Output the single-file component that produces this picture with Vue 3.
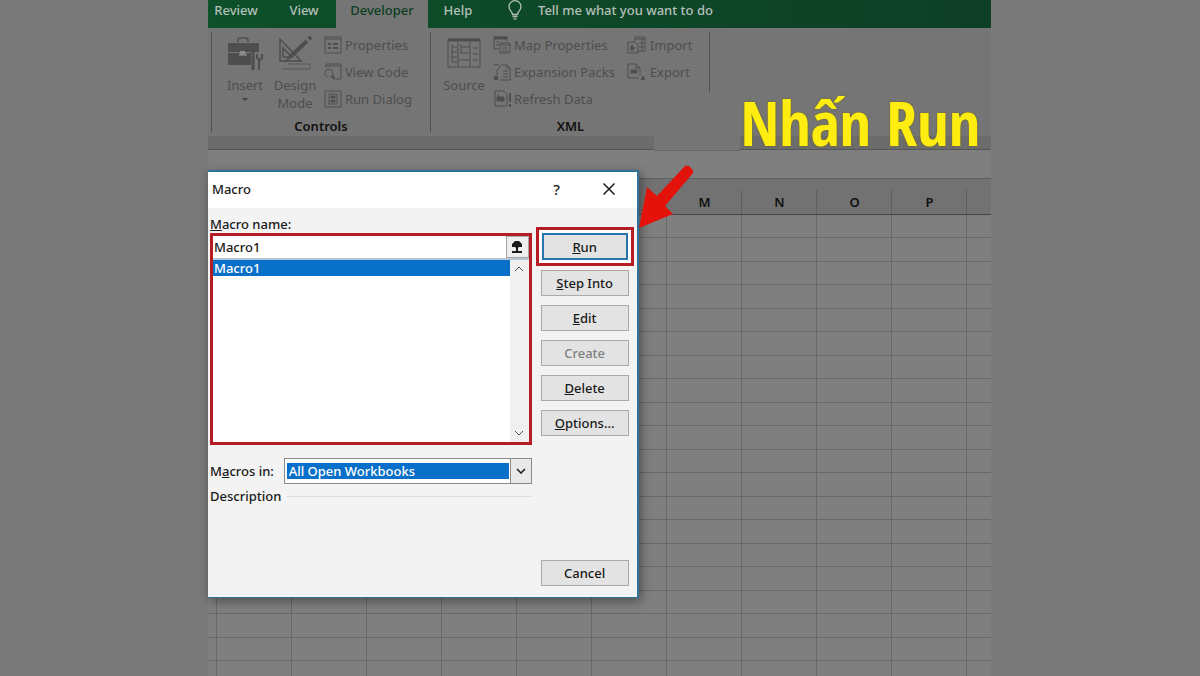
<script setup>
import { ref } from 'vue';

const macroName = ref('Macro1');
const macrosIn = ref('All Open Workbooks');
const macros = ['Macro1'];

const actions = [
  { key: 'S', rest: 'tep Into' },
  { key: 'E', rest: 'dit' },
  { key: '', rest: 'Create', disabled: true },
  { key: 'D', rest: 'elete' },
  { key: 'O', rest: 'ptions...' }
];

const columns = ['', '', '', '', '', '', '', 'M', 'N', 'O', 'P', ''];
const rows = 20;
</script>

<template>
  <main class="page">
    <div class="workbook">
      <nav class="tabs">
        <a href="#" class="tab review">Review</a>
        <a href="#" class="tab view">View</a>
        <a href="#" class="tab active">Developer</a>
        <a href="#" class="tab help">Help</a>
        <a href="#" class="tell-me">
          <svg width="16" height="20" viewBox="0 0 16 20" fill="none" stroke="currentColor" stroke-width="1.3">
            <path d="M5.5 14.5C5.5 11.5 2 10.5 2 6.5a6 5.8 0 0 1 12 0c0 4-3.5 5-3.5 8zM5.5 16.5h5M6.5 18.8h3" />
          </svg>
          <span>Tell me what you want to do</span>
        </a>
      </nav>

      <section class="ribbon">
        <div class="group controls">
          <div class="tools">
            <button class="big insert">
              <svg width="38" height="36" viewBox="0 0 38 36">
                <path d="M12 6V4q0-2 2-2h6q2 0 2 2v2" fill="none" stroke="currentColor" stroke-width="1.5" />
                <path d="M2 7h31v9H2zM2 17h11v3h8v-3h4v12H2z" fill="currentColor" />
                <path d="M14 15h5v4h-5z" fill="#8c8c8c" />
                <path d="M27 16v9M27 24v10" fill="none" stroke="currentColor" stroke-width="3" />
                <path d="M31 18v4l3 2 2-2v-4M33 23v11" fill="none" stroke="currentColor" stroke-width="2" />
              </svg>
              <span>Insert</span>
              <span class="caret"></span>
            </button>
            <button class="big design">
              <svg width="38" height="36" viewBox="0 0 38 36" fill="none" stroke="currentColor">
                <path d="M4 3v22h21zM7 12v9h9z" stroke-width="1.5" />
                <path d="M14 21L31 5" stroke-width="4" />
                <path d="M33 3l2-2" stroke-width="4" />
                <path d="M15 20l-6 6" stroke-width="2" />
                <path d="M12 28h22v5H6" stroke-width="1" opacity="0.7" />
              </svg>
              <span>Design<br>Mode</span>
            </button>
            <ul class="list">
              <li>
                <button>
                  <svg width="18" height="18" viewBox="0 0 18 18" fill="none" stroke="currentColor">
                    <path d="M1 1h16v16H1zM1 3h16" />
                    <path d="M4 8h3M9 8h5M4 12h3M9 12h5" stroke-width="2" />
                  </svg>
                  Properties
                </button>
              </li>
              <li>
                <button>
                  <svg width="18" height="18" viewBox="0 0 18 18" fill="none" stroke="currentColor">
                    <path d="M2 4V1h15v15h-5M2 3h15" />
                    <path d="M4 14a4 4 0 1 1 5-4v5" /><path d="M7 13l4 3" stroke-width="2" />
                  </svg>
                  View Code
                </button>
              </li>
              <li>
                <button>
                  <svg width="18" height="18" viewBox="0 0 18 18" fill="none" stroke="currentColor">
                    <path d="M1 1h16v16H1zM5 4h8v10H5z" />
                    <path d="M7 6h4v2H7zM7 10h4v2H7z" fill="currentColor" />
                  </svg>
                  Run Dialog
                </button>
              </li>
            </ul>
          </div>
          <h2>Controls</h2>
        </div>

        <div class="group xml">
          <div class="tools">
            <button class="big source">
              <svg width="34" height="36" viewBox="0 0 34 36" fill="none" stroke="currentColor">
                <path d="M1 3h32v28H1z" />
                <path d="M1 4h32" stroke-width="3" />
                <path d="M11 6v25M23 6v25M5 8v18M5 11h5M5 16h5M5 21h5M5 26h5M14 11h9M14 17h9M11 24h12M26 12h5M26 18h5M26 24h5M14 8v10" />
              </svg>
              <span>Source</span>
            </button>
            <ul class="list">
              <li>
                <button>
                  <svg width="18" height="18" viewBox="0 0 18 18" fill="none" stroke="currentColor">
                    <path d="M6 13H1V1h13v4" /><path d="M1 2h13" stroke-width="3" />
                    <path d="M7 7h10v10H7zM7 9h10M9 12h6M9 15h6M3 6h3M3 9h3" />
                  </svg>
                  Map Properties
                </button>
              </li>
              <li>
                <button>
                  <svg width="18" height="18" viewBox="0 0 18 18" fill="none" stroke="currentColor">
                    <path d="M8 2h6l3 3v12H7M14 2v3h3M10 8h5M10 11h5M10 14h5M1 2l4-1 2 3-3 3v5" />
                    <circle cx="3" cy="15" r="2" fill="currentColor" />
                  </svg>
                  Expansion Packs
                </button>
              </li>
              <li>
                <button>
                  <svg width="18" height="18" viewBox="0 0 18 18" fill="none" stroke="currentColor">
                    <path d="M14 16H2V1h9l3 3v12M5 4v3" />
                    <path d="M4 7h7v4H4z" fill="currentColor" /><path d="M17 3v9M17 14v3" stroke-width="2" />
                  </svg>
                  Refresh Data
                </button>
              </li>
            </ul>
            <ul class="list transfer">
              <li>
                <button>
                  <svg width="20" height="18" viewBox="0 0 20 18" fill="none" stroke="currentColor">
                    <path d="M1 6h7l3 3v8H1zM8 5V1h10v14h-7M8 3h10M12 7h5M12 11h5M15 3v12" />
                    <path d="M5 9v6M3 12h5" stroke-width="2" />
                  </svg>
                  Import
                </button>
              </li>
              <li>
                <button>
                  <svg width="20" height="18" viewBox="0 0 20 18" fill="none" stroke="currentColor">
                    <path d="M12 15H1V1h8l4 4v8M9 1v4h4" />
                    <path d="M4 7h6v3H4z" fill="currentColor" /><path d="M14 16h4M16 13v4" stroke-width="2" />
                  </svg>
                  Export
                </button>
              </li>
            </ul>
          </div>
          <h2>XML</h2>
        </div>
      </section>

      <div class="ribbon-edge"><span></span><i></i><b></b></div>

      <table class="sheet">
        <colgroup>
          <col class="stub">
          <col v-for="n in 10" :key="n" class="cell-col">
          <col>
        </colgroup>
        <thead>
          <tr>
            <th v-for="(name, i) in columns" :key="i">{{ name }}</th>
          </tr>
        </thead>
        <tbody>
          <tr v-for="r in rows" :key="r">
            <td v-for="(name, i) in columns" :key="i"></td>
          </tr>
        </tbody>
      </table>

      <section class="dialog" role="dialog" aria-labelledby="dialog-title">
        <header class="titlebar">
          <h1 id="dialog-title">Macro</h1>
          <button class="title-btn" aria-label="Help">?</button>
          <button class="title-btn" aria-label="Close">
            <svg width="12" height="12" viewBox="0 0 12 12" stroke="currentColor" stroke-width="1.5">
              <path d="M0.5 0.5l11 11M11.5 0.5l-11 11" />
            </svg>
          </button>
        </header>

        <div class="body">
          <div class="left">
            <label class="name-label" for="macro-name"><u>M</u>acro name:</label>
            <div class="picker">
              <div class="name-row">
                <input id="macro-name" v-model="macroName" type="text">
                <button aria-label="Collapse dialog">
                  <svg width="12" height="12" viewBox="0 0 12 12" fill="currentColor">
                    <path d="M4 0h4l3 3v3H8L7 7v3h4v2H1v-2h4V7L4 6H1V3z" />
                  </svg>
                </button>
              </div>
              <div class="list-row">
                <ul role="listbox" aria-label="Macros">
                  <li v-for="m in macros" :key="m" role="option" :aria-selected="m === macroName" @click="macroName = m">{{ m }}</li>
                </ul>
                <div class="scrollbar">
                  <svg width="10" height="6" viewBox="0 0 10 6" fill="none" stroke="currentColor"><path d="M1 5l4-4 4 4" /></svg>
                  <svg width="10" height="6" viewBox="0 0 10 6" fill="none" stroke="currentColor"><path d="M1 1l4 4 4-4" /></svg>
                </div>
              </div>
            </div>

            <div class="scope">
              <label for="macros-in">M<u>a</u>cros in:</label>
              <div class="combo">
                <select id="macros-in" v-model="macrosIn">
                  <option>All Open Workbooks</option>
                </select>
                <span class="arrow-box">
                  <svg width="10" height="6" viewBox="0 0 10 6" fill="none" stroke="currentColor" stroke-width="1.5"><path d="M1 1l4 4 4-4" /></svg>
                </span>
              </div>
            </div>
            <div class="description"><span>Description</span></div>
          </div>

          <div class="actions">
            <div class="run-frame"><button class="btn primary"><u>R</u>un</button></div>
            <button v-for="a in actions" :key="a.rest" class="btn" :disabled="a.disabled"><u>{{ a.key }}</u>{{ a.rest }}</button>
            <button class="btn cancel">Cancel</button>
          </div>
        </div>
      </section>

      <svg class="pointer" width="56" height="66" viewBox="0 0 56 66">
        <path d="M0 63L8 22l10 9L46 1q2-1 4 0l3 3q2 2 1 4L26 41l8 8z" fill="#e3120b" />
      </svg>
      <p class="callout">Nhấn Run</p>
    </div>
  </main>
</template>

<style>
body {
  margin: 0;
}
</style>

<style scoped>
.page {
  height: 100vh;
  padding: 0 209px 0 208px;
  overflow: hidden;
  box-sizing: border-box;
  background: #797979;
  font-family: "Noto Sans", sans-serif;
  font-size: 13px;
  line-height: 18px;
  color: #1a1a1a;
}

.workbook {
  position: relative;
  background: #7f7f7f;
}

button {
  font: inherit;
  color: inherit;
  padding: 0;
  border: 0;
  background: none;
}

ul {
  list-style: none;
  margin: 0;
  padding: 0;
}

h1,
h2 {
  margin: 0;
  font-size: 13px;
  font-weight: 500;
}

.tabs {
  display: flex;
  height: 28px;
  background: linear-gradient(to right, #0d502a, #0e3f26);
  white-space: nowrap;
  font-weight: 500;
}

.tabs a {
  display: flex;
  align-items: center;
  justify-content: center;
  height: 20px;
  color: #b5c0b9;
  text-decoration: none;
}

.tabs .review {
  width: 56px;
}

.tabs .view {
  width: 80px;
}

.tabs .active {
  width: 92px;
  height: 28px;
  margin-left: -8px;
  padding-bottom: 8px;
  box-sizing: border-box;
  background: #757575;
  color: #0c3d22;
}

.tabs .help {
  width: 60px;
}

.tabs .tell-me {
  gap: 15px;
  margin-left: 19px;
}

.ribbon {
  display: flex;
  height: 108px;
  padding: 4px 3px 0;
  box-sizing: border-box;
  background: #757575;
  white-space: nowrap;
}

.group {
  display: flex;
  flex-direction: column;
  border-left: 1px solid #505050;
  height: 100px;
}

.controls {
  width: 218px;
}

.xml {
  width: 279px;
}

.tools {
  display: flex;
  height: 85px;
  color: #4e4e4e;
}

.xml .tools {
  height: 60px;
  margin-bottom: 25px;
  border-right: 1px solid #505050;
}

.group h2 {
  text-align: center;
  line-height: 18px;
  font-weight: 600;
  color: #111;
}

.big {
  display: flex;
  flex-direction: column;
  align-items: center;
  height: 84px;
  width: 50px;
  padding-top: 4px;
}

.big span {
  margin-top: 4px;
}

.big.insert {
  margin-left: 8px;
}

.big.source {
  margin-left: 8px;
}

.big .caret {
  border: 3px solid transparent;
  border-top-color: #444;
}

.list {
  margin: 4px 0 0 4px;
}

.list li {
  height: 27px;
}

.list button {
  display: flex;
  align-items: center;
  gap: 3px;
}

.transfer {
  margin-left: 12px;
}

.ribbon-edge {
  display: flex;
  height: 42px;
  border-bottom: 1px solid #5f5f5f;
}

.ribbon-edge span,
.ribbon-edge b {
  width: 57%;
  height: 13px;
  background: #6c6c6c;
  border-bottom: 1px solid #555;
}

.ribbon-edge i {
  flex: 1;
  height: 14px;
  background: #757575;
  border-bottom: 1px solid #666;
}

.ribbon-edge b {
  width: 32%;
}

.sheet {
  width: 100%;
  table-layout: fixed;
  border-collapse: separate;
  border-spacing: 0;
}

.stub {
  width: 9px;
}

.cell-col {
  width: 75px;
}

.sheet th {
  height: 36px;
  padding: 10px 0 0;
  box-sizing: border-box;
  border-bottom: 1px solid #454545;
  background: linear-gradient(#5f5f5f, #5f5f5f) right bottom / 1px 24px no-repeat #727272;
  font-weight: 600;
  color: #111;
}

.sheet td {
  height: 23px;
  padding: 0;
  box-sizing: border-box;
  border-right: 1px solid #686868;
  border-bottom: 1px solid #686868;
}

.sheet th:last-child {
  background: #727272;
}

.sheet td:last-child {
  border-right: 0;
}

.sheet tr:nth-child(even) td {
  height: 24px;
}

.dialog {
  position: absolute;
  top: 170px;
  left: 0;
  width: 55%;
  box-sizing: border-box;
  border: solid #2f7299;
  border-width: 2px 2px 1px 0;
  background: #f3f3f3;
  box-shadow: 2px 3px 10px rgba(0, 0, 0, 0.4);
  font-weight: 500;
}

.titlebar {
  display: flex;
  align-items: center;
  height: 36px;
  padding: 0 2px 2px 4px;
  box-sizing: border-box;
  background: #fff;
}

.titlebar h1 {
  flex: 1;
}

.title-btn {
  width: 52px;
  height: 34px;
  font-size: 15px;
}

.body {
  display: flex;
  gap: 4px;
  padding: 7px 3px 11px 2px;
}

.left {
  flex: 1;
}

.name-label {
  display: block;
  height: 18px;
}

.picker {
  border: 3px solid #b51c24;
  background: #fff;
}

.name-row {
  display: flex;
  height: 22px;
  border-bottom: 2px solid #b4c4d2;
}

.name-row input {
  flex: 1;
  min-width: 0;
  padding: 0 1px;
  border: 0;
  outline: 0;
  background: #fff;
  font: inherit;
  color: inherit;
}

.name-row button {
  display: flex;
  align-items: center;
  justify-content: center;
  width: 23px;
  border: 1px solid #a5a5a5;
  background: #eee;
  box-sizing: border-box;
}

.list-row {
  display: flex;
  height: 182px;
}

.list-row ul {
  flex: 1;
}

.list-row li {
  height: 16px;
  padding-left: 1px;
  line-height: 16px;
  background: #0870c8;
  color: #fff;
}

.scrollbar {
  display: flex;
  flex-direction: column;
  justify-content: space-between;
  align-items: center;
  width: 19px;
  padding: 6px 0;
  box-sizing: border-box;
  background: #f0f0f0;
  color: #555;
}

.scope {
  display: flex;
  align-items: center;
  justify-content: space-between;
  height: 26px;
  margin-top: 13px;
}

.combo {
  display: flex;
  align-items: center;
  width: 248px;
  height: 26px;
  box-sizing: border-box;
  border: 1px solid #8a8a8a;
  background: #fff;
}

.combo select {
  flex: 1;
  min-width: 0;
  height: 16px;
  margin: 0 1px 0 2px;
  padding: 0 2px;
  border: 0;
  appearance: none;
  background: #0870c8;
  color: #fff;
  font: inherit;
  line-height: 16px;
}

.arrow-box {
  display: flex;
  align-items: center;
  justify-content: center;
  width: 20px;
  height: 24px;
  border-left: 1px solid #8a8a8a;
  background: #e9e9e9;
}

.description {
  display: flex;
  align-items: center;
  gap: 6px;
  margin-top: 3px;
}

.description::after {
  content: '';
  flex: 1;
  border-top: 1px solid #dcdcdc;
}

.actions {
  display: flex;
  flex-direction: column;
  gap: 9px;
  width: 98px;
  padding-top: 12px;
}

.run-frame {
  display: flex;
  margin-bottom: -5px;
  padding: 3px;
  border: 3px solid #b51c24;
  background: #fff;
}

.btn {
  height: 26px;
  margin: 0 5px;
  border: 1px solid #a9a9a9;
  background: #e3e3e3;
}

.btn:disabled {
  color: #808080;
}

.btn.primary {
  flex: 1;
  height: 27px;
  margin: 0;
  border: 2px solid #2874ad;
}

.actions .btn.cancel {
  margin-top: 115px;
}

.pointer {
  position: absolute;
  top: 165px;
  left: 55%;
}

.callout {
  position: absolute;
  top: 84px;
  left: 68%;
  margin: 0;
  font-family: "Open Sans Condensed", "Noto Sans Condensed", "Roboto Condensed", Roboto, sans-serif;
  font-size: 62px;
  font-weight: 700;
  line-height: 76px;
  white-space: nowrap;
  color: #ffed12;
  text-shadow: 0 0 2px #6b6400;
}
</style>
